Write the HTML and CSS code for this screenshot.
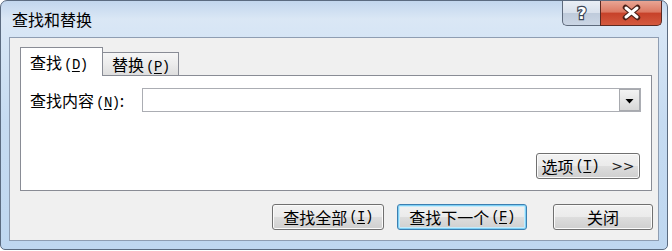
FILE: index.html
```html
<!DOCTYPE html>
<html lang="zh-CN">
<head>
<meta charset="utf-8">
<title>查找和替换</title>
<link rel="stylesheet" href="styles.css">
</head>
<body>
<div class="window">
  <div class="titlebar">
    <div class="title">查找和替换</div>
    <div class="controls">
      <div class="ctl help">
        <svg width="38" height="24" viewBox="0 0 38 24"><text x="19" y="18" text-anchor="middle" class="qmark">?</text></svg>
      </div>
      <div class="ctl close">
        <svg width="61" height="24" viewBox="0 0 61 24">
          <path d="M24.5 6.5 L36.5 16.5 M36.5 6.5 L24.5 16.5" stroke="#4a2018" stroke-width="5.5" stroke-linecap="round" fill="none"/>
          <path d="M25 7 L36 16 M36 7 L25 16" stroke="#ffffff" stroke-width="3" stroke-linecap="round" fill="none"/>
        </svg>
      </div>
    </div>
  </div>
  <div class="client">
    <div class="tabs">
      <div class="tab tab-active">查找<span class="mn">(<u>D</u>)</span></div>
      <div class="tab tab-inactive">替换<span class="mn">(<u>P</u>)</span></div>
    </div>
    <div class="panel">
      <div class="row">
        <div class="label">查找内容<span class="mn">(<u>N</u>)</span>:</div>
        <div class="combo">
          <div class="combo-btn">
            <svg width="9" height="6" viewBox="0 0 9 6"><path d="M0.5 1 L8.5 1 L4.5 5.5 Z" fill="#000"/></svg>
          </div>
        </div>
      </div>
      <div class="opt-row">
        <div class="btn opt">选项<span class="mn">(<u>T</u>)</span><span class="chev">&gt;&gt;</span></div>
      </div>
    </div>
    <div class="actions">
      <div class="btn b-all">查找全部<span class="mn">(<u>I</u>)</span></div>
      <div class="btn btn-default b-next">查找下一个<span class="mn">(<u>F</u>)</span></div>
      <div class="btn b-close">关闭</div>
    </div>
  </div>
</div>
</body>
</html>
```
FILE: styles.css
```css
* { box-sizing: border-box; }
html, body { margin: 0; padding: 0; background: #ffffff; }
body {
  font-family: "Noto Sans CJK SC", "Noto Sans", sans-serif;
  font-size: 16px;
  color: #000;
}
.window {
  width: 668px;
  height: 250px;
  border: 1px solid #5b6b80;
  border-radius: 7px 7px 5px 5px;
  background: linear-gradient(180deg, #c2d6ed 0px, #dae7f5 18px, #d6e5f5 36px, #c6dbf1 120px, #bfd7f0 100%);
  padding: 0 8px 8px 8px;
  display: flex;
  flex-direction: column;
}
.titlebar {
  height: 36px;
  display: flex;
  justify-content: space-between;
  align-items: flex-start;
}
.title {
  line-height: 36px;
  padding-left: 3px;
}
.controls {
  display: flex;
  margin-right: -3px;
}
.ctl { height: 25px; }
.ctl svg { display: block; }
.help {
  width: 38px;
  border: 1px solid #5e6a7c;
  border-top: none;
  border-right: none;
  border-radius: 0 0 0 5px;
  background: linear-gradient(180deg, #e9eef5 0%, #d9e1ec 48%, #bfcbdb 52%, #cbd6e5 100%);
}
.close {
  width: 62px;
  border: 1px solid #5a2a22;
  border-top: none;
  border-radius: 0 0 5px 0;
  background: linear-gradient(180deg, #e8a594 0%, #dc7a64 45%, #c7422a 52%, #d45a3f 100%);
}
.qmark {
  font-family: "DejaVu Sans", sans-serif;
  font-weight: bold;
  font-size: 16px;
  fill: #ffffff;
  stroke: #3d4656;
  stroke-width: 2.4px;
  paint-order: stroke;
}
.client {
  flex: 1;
  background: #f0f0f0;
  border: 1px solid #8e9db2;
  padding: 9px 5px 10px 10px;
  display: flex;
  flex-direction: column;
}
.tabs {
  display: flex;
  align-items: flex-end;
  height: 29px;
  margin-bottom: -1px;
  position: relative;
  z-index: 1;
}
.tab {
  padding-left: 9px;
  white-space: nowrap;
}
.tab-active {
  width: 83px;
  height: 29px;
  border: 1px solid #898c95;
  border-bottom: none;
  background: #ffffff;
  line-height: 28px;
}
.tab-inactive {
  width: 76px;
  height: 24px;
  border: 1px solid #898c95;
  border-left: none;
  background: linear-gradient(180deg, #f6f6f6 0%, #ececec 50%, #dedede 100%);
  line-height: 22px;
}
.mn {
  font-family: "Liberation Mono", monospace;
  font-size: 14px;
  margin-left: 2px;
  letter-spacing: -0.5px;
}
.mn u { text-underline-offset: 2px; }
.panel {
  height: 116px;
  margin-right: 1px;
  border: 1px solid #898c95;
  background: #ffffff;
  padding: 12px 10px 11px 9px;
  display: flex;
  flex-direction: column;
}
.row {
  display: flex;
  align-items: center;
  height: 24px;
}
.label {
  flex: 0 0 112px;
  white-space: nowrap;
}
.combo {
  flex: 1;
  height: 24px;
  border: 1px solid #abadb3;
  background: #ffffff;
  display: flex;
  justify-content: flex-end;
}
.combo-btn {
  width: 21px;
  height: 22px;
  border: 1px solid #a7a9ae;
  background: linear-gradient(180deg, #f3f3f3 0%, #e6e6e6 50%, #d8d8d8 100%);
  display: flex;
  align-items: center;
  justify-content: center;
}
.combo-btn svg { display: block; margin-top: 1px; }
.opt-row {
  margin-top: auto;
  display: flex;
  justify-content: flex-end;
}
.btn {
  height: 26px;
  border: 1px solid #707070;
  border-radius: 3px;
  background: linear-gradient(180deg, #f2f2f2 0%, #ebebeb 48%, #dddddd 52%, #cfcfcf 100%);
  box-shadow: inset 0 0 0 1px #fbfbfb;
  display: flex;
  align-items: center;
  justify-content: center;
  line-height: 24px;
  white-space: nowrap;
}
.opt {
  width: 104px;
  margin-right: 1px;
}
.chev {
  font-family: "DejaVu Sans", sans-serif;
  font-size: 14px;
  margin-left: 12px;
  letter-spacing: 0px;
  color: #222;
}
.actions {
  margin-top: 13px;
  display: flex;
  justify-content: flex-end;
}
.b-all { width: 112px; }
.b-next { width: 130px; margin-left: 13px; }
.b-close { width: 100px; margin-left: 26px; }
.btn-default {
  border-color: #3c7fb1;
  box-shadow: inset 0 0 0 1px #7fd0f5, inset 0 0 0 2px #c6ebfb;
}
```
